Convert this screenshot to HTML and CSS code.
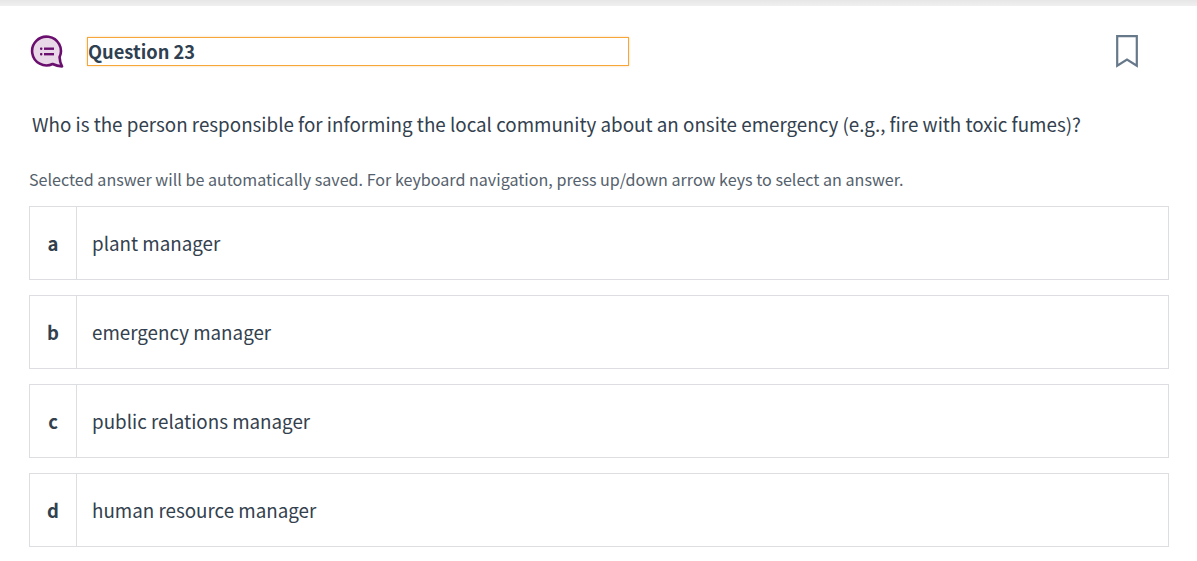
FILE: index.html
```html
<!DOCTYPE html>
<html lang="en">
<head>
<meta charset="utf-8">
<title>Question 23</title>
<link rel="stylesheet" href="styles.css">
</head>
<body>
<div class="topbar"></div>
<main class="page">
  <header class="head">
    <svg class="qicon" width="36" height="33" viewBox="0 0 36 33" aria-hidden="true">
      <path d="M23.600 29.050A14.400 14.400 0 1 1 30.550 22.100C30.700 25 31.200 28 33 31.400 29.800 31.200 26.500 30.400 23.600 29.050Z" fill="#e9d8e8" stroke="#6a0f6e" stroke-width="2.600" stroke-linejoin="round"/>
      <g fill="#6a0f6e"><rect x="11" y="12.500" width="2.400" height="2.400" rx=".8"/><rect x="11" y="18" width="2.400" height="2.400" rx=".8"/><rect x="15" y="12.500" width="10" height="2.400"/><rect x="15" y="18" width="10" height="2.400"/></g>
    </svg>
    <h2 class="title">Question 23</h2>
    <svg class="mark" width="22" height="33" viewBox="0 0 22 33" aria-hidden="true">
      <path d="M1.200 1.200H20.800V30.800L11 24.600 1.200 30.800Z" fill="none" stroke="#66788a" stroke-width="2.200"/>
    </svg>
  </header>
  <p class="question">Who is the person responsible for informing the local community about an onsite emergency (e.g., fire with toxic fumes)?</p>
  <p class="hint">Selected answer will be automatically saved. For keyboard navigation, press up/down arrow keys to select an answer.</p>
  <ul class="answers">
    <li class="answer"><span class="letter">a</span><span class="text">plant manager</span></li>
    <li class="answer"><span class="letter">b</span><span class="text">emergency manager</span></li>
    <li class="answer"><span class="letter">c</span><span class="text">public relations manager</span></li>
    <li class="answer"><span class="letter">d</span><span class="text">human resource manager</span></li>
  </ul>
</main>
</body>
</html>
```
FILE: styles.css
```css
* { box-sizing: border-box; }
html, body { margin: 0; padding: 0; background: #fff; }
body {
  font-family: "Noto Sans CJK SC", "Noto Sans", sans-serif;
  color: #33414e;
  height: 561px;
  overflow: hidden;
}
.topbar {
  height: 6px;
  background: linear-gradient(#e6e6e6, #f0f0f0);
}
.page { padding: 0 28px 0 29px; }
.head {
  display: flex;
  align-items: center;
  height: 33px;
  margin-top: 29px;
}
.qicon { flex: none; }
.title {
  width: 542px;
  height: 29px;
  margin: 0 0 0 22px;
  border: 1px solid #f7a63a;
  box-shadow: 0 0 2px rgba(247, 166, 58, .45);
  font-size: 18.300px;
  line-height: 26px;
  font-weight: 600;
  color: #2f4050;
}
.mark { margin: 0 31px 0 auto; }
.question {
  margin: 38px 0 0 3px;
  font-size: 18.800px;
  line-height: 36px;
  white-space: nowrap;
}
.hint {
  margin: 25px 0 0;
  font-size: 16.100px;
  line-height: 24px;
  color: #55616c;
}
.answers { list-style: none; margin: 15px 0 0; padding: 0; display: flex; flex-direction: column; gap: 15px; }
.answer {
  display: flex;
  height: 74px;
  border: 1px solid #dcdee2;
  align-items: stretch;
}
.letter {
  width: 47px;
  flex: none;
  border-right: 1px solid #dcdee2;
  display: flex;
  align-items: center;
  justify-content: center;
  padding-bottom: 1px;
  font-size: 18.500px;
  font-weight: 600;
}
.text {
  display: flex;
  align-items: center;
  padding: 0 0 2px 15px;
  font-size: 18.800px;
}
```
